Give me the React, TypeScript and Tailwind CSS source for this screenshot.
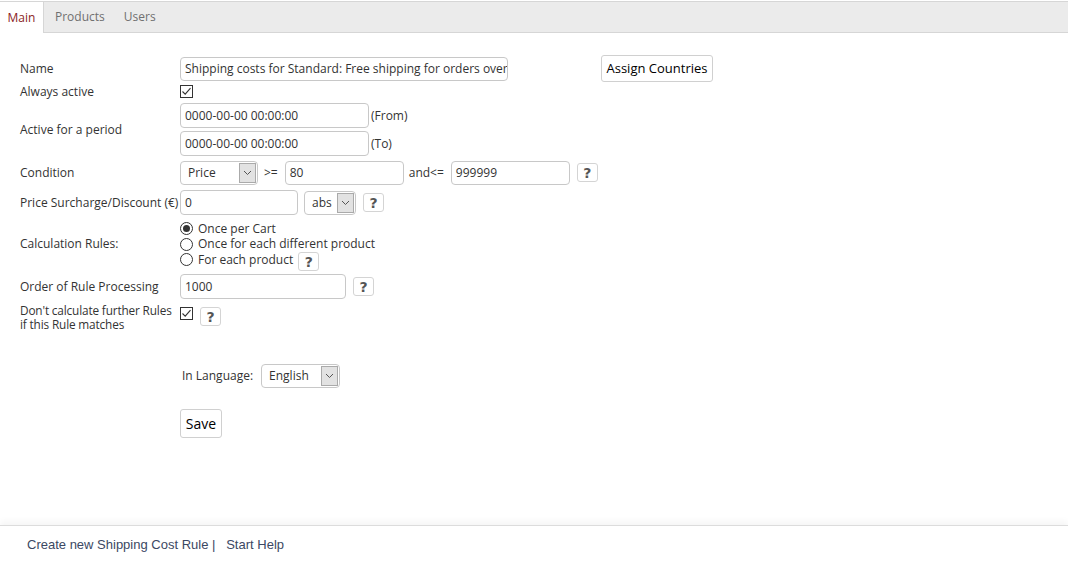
import React from "react";

const font = { fontFamily: "Tahoma, 'Open Sans', Roboto, sans-serif" };

function Check() {
  return (
    <span className="inline-flex h-[13px] w-[13px] items-center justify-center border border-[#333] bg-white">
      <svg width="11" height="11" viewBox="0 0 11 11">
        <path d="M1.5 5.5 L4.2 8.2 L9.5 2.2" fill="none" stroke="#333" strokeWidth="1.1" />
      </svg>
    </span>
  );
}

function Radio({ on }: { on?: boolean }) {
  return (
    <span className="inline-flex h-[13px] w-[13px] items-center justify-center rounded-full border border-[#333] bg-white">
      {on && <span className="h-[7px] w-[7px] rounded-full bg-[#333]" />}
    </span>
  );
}

function Help({ className = "" }: { className?: string }) {
  return (
    <span
      className={`inline-flex h-[19px] w-[21px] items-center justify-center rounded-[3px] border border-[#d4d4d4] bg-white pt-[1px] text-[14px] font-bold text-[#555] ${className}`}
      style={{ fontFamily: "'DejaVu Sans', sans-serif" }}
    >
      ?
    </span>
  );
}

function Input({ value, w, h = "h-[25px]" }: { value: string; w: string; h?: string }) {
  return (
    <div className={`flex ${h} ${w} items-center overflow-hidden whitespace-nowrap rounded-[4px] border border-[#c8c8c8] bg-white px-[4px] text-[12px] text-[#333]`}>
      {value}
    </div>
  );
}

function Select({ value, w }: { value: string; w: string }) {
  return (
    <div className={`flex h-[24px] ${w} items-stretch overflow-hidden rounded-[4px] border border-[#c8c8c8] bg-white text-[12px] text-[#333]`}>
      <span className="flex flex-1 items-center pl-[7px]">{value}</span>
      <span className="my-[1px] mr-[1px] flex w-[17px] items-center justify-center border border-[#aaa] bg-[#e2e2e2]">
        <svg width="9" height="6" viewBox="0 0 9 6">
          <path d="M1 1 L4.5 4.5 L8 1" fill="none" stroke="#555" strokeWidth="1" />
        </svg>
      </span>
    </div>
  );
}

function Button({ children, className = "" }: { children: React.ReactNode; className?: string }) {
  return (
    <span className={`inline-flex items-center justify-center rounded-[3px] border border-[#d0d0d0] bg-white text-[13px] text-black ${className}`}>
      {children}
    </span>
  );
}

function Row({ label, h, children, top = false }: { label: React.ReactNode; h: string; children?: React.ReactNode; top?: boolean }) {
  return (
    <div className={`flex ${h} ${top ? "items-start" : "items-center"}`}>
      <div className="w-[160px] shrink-0 text-[12px] leading-[14px] text-[#333]">{label}</div>
      <div className="flex items-center">{children}</div>
    </div>
  );
}

export default function App() {
  return (
    <div className="flex h-[564px] w-[1068px] flex-col bg-white" style={font}>
      <div className="mt-[1px] flex h-[32px] items-stretch border-y border-[#d6d6d6] bg-[#ebebeb] text-[12px]">
        <div className="-mb-[1px] flex w-[44px] items-center justify-center border-r border-[#d6d6d6] bg-white text-[#8b1c24]">Main</div>
        <div className="flex items-center px-[11px] text-[#707070]">Products</div>
        <div className="flex items-center px-[8px] text-[#707070]">Users</div>
      </div>

      <div className="flex flex-1 flex-col pl-[20px] pt-[22px]">
        <Row label="Name" h="h-[27px]">
          <Input value="Shipping costs for Standard: Free shipping for orders over" w="w-[328px]" h="h-[24px]" />
          <Button className="ml-[93px] h-[27px] w-[112px]">Assign Countries</Button>
        </Row>
        <Row label="Always active" h="h-[19px]">
          <Check />
        </Row>
        <Row label="Active for a period" h="h-[57px]">
          <div className="flex flex-col gap-[3px]">
            <div className="flex items-center text-[12px] text-[#333]">
              <Input value="0000-00-00 00:00:00" w="w-[189px]" />
              <span className="ml-[2px]">(From)</span>
            </div>
            <div className="flex items-center text-[12px] text-[#333]">
              <Input value="0000-00-00 00:00:00" w="w-[189px]" />
              <span className="ml-[2px]">(To)</span>
            </div>
          </div>
        </Row>
        <Row label="Condition" h="h-[29px]">
          <Select value="Price" w="w-[78px]" />
          <span className="ml-[6px] mr-[7px] text-[12px] text-[#333]">&gt;=</span>
          <Input value="80" w="w-[119px]" h="h-[24px]" />
          <span className="ml-[5px] mr-[7px] text-[12px] text-[#333]">and&lt;=</span>
          <Input value="999999" w="w-[119px]" h="h-[24px]" />
          <Help className="ml-[7px]" />
        </Row>
        <Row label="Price Surcharge/Discount (€)" h="h-[31px]">
          <Input value="0" w="w-[118px]" />
          <Select value="abs" w="w-[52px] ml-[6px]" />
          <Help className="ml-[7px]" />
        </Row>
        <Row label="Calculation Rules:" h="h-[52px]">
          <div className="flex flex-col text-[12px] text-[#333]">
            <div className="flex h-[16px] items-center gap-[5px]">
              <Radio on /> <span>Once per Cart</span>
            </div>
            <div className="flex h-[15px] items-center gap-[5px]">
              <Radio /> <span>Once for each different product</span>
            </div>
            <div className="flex h-[16px] items-center gap-[5px]">
              <Radio /> <span>For each product</span>
              <Help className="mt-[4px]" />
            </div>
          </div>
        </Row>
        <Row label="Order of Rule Processing" h="h-[33px]">
          <Input value="1000" w="w-[166px]" />
          <Help className="ml-[7px]" />
        </Row>
        <Row
          label={
            <span className="block text-[11.8px] tracking-[-0.15px]">
              Don't calculate further Rules
              <br />
              if this Rule matches
            </span>
          }
          h="h-[60px]"
          top
        >
          <div className="flex items-start pt-[4px]">
            <Check />
            <Help className="ml-[7px] mt-[0px]" />
          </div>
        </Row>
        <div className="flex h-[26px] items-center pl-[162px] text-[12px] text-[#333]">
          <span>In Language:</span>
          <Select value="English" w="w-[79px] ml-[8px]" />
        </div>
        <div className="pl-[160px] pt-[20px]">
          <Button className="h-[29px] w-[42px] text-[14px]">Save</Button>
        </div>
      </div>

      <div className="h-[39px] border-t border-[#dcdcdc] shadow-[0_-4px_6px_rgba(0,0,0,0.04)]">
        <div
          className="pl-[27px] pt-[9px] text-[13px] text-[#3b4863]"
          style={{ fontFamily: "'Liberation Sans', Arial, sans-serif" }}
        >
          Create new Shipping Cost Rule&nbsp;|&nbsp;&nbsp;&nbsp;Start Help
        </div>
      </div>
    </div>
  );
}
